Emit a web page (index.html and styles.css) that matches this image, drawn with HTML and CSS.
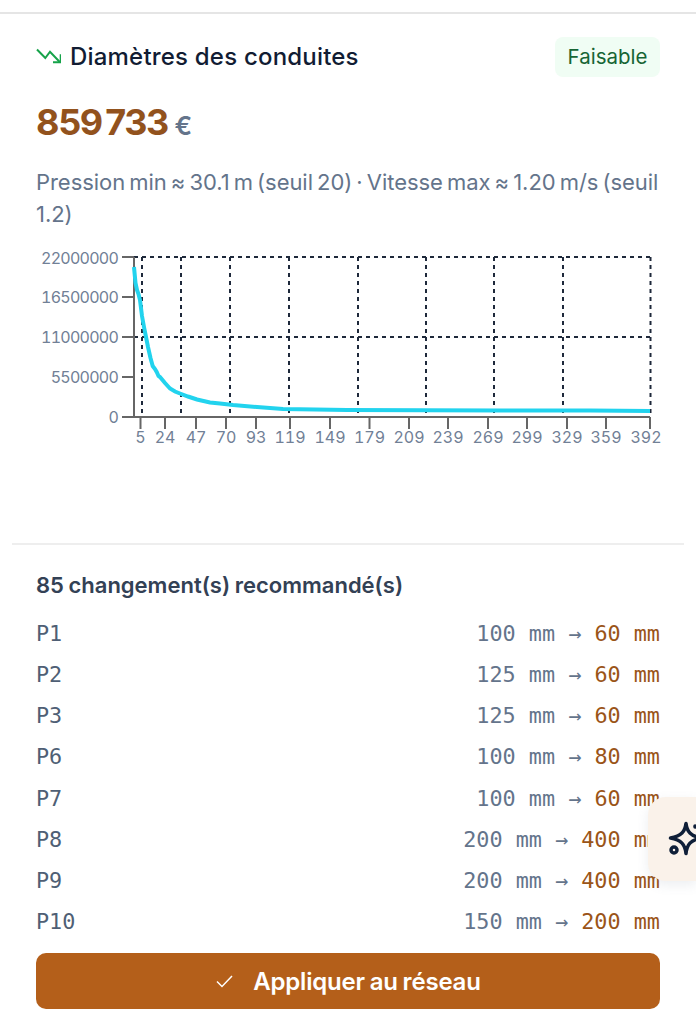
FILE: index.html
```html
<!DOCTYPE html>
<html lang="fr">
<head>
    <meta charset="UTF-8">
    <title>Diamètres des conduites</title>
    <link rel="stylesheet" href="styles.css">
</head>
<body>
<div class="panel">
    <div class="summary">
        <div class="head_row">
            <h2 class="title">
                <svg class="trend_icon" width="25" height="24" viewBox="0 0 25 24" fill="none" stroke="#16a34a" stroke-width="2">
                    <path d="M1 5.500l8.300 8.500 4.700-6.300 10 10.600"/>
                    <path d="M17 18.300h7.700v-8"/>
                </svg>
                Diamètres des conduites
            </h2>
            <span class="badge">Faisable</span>
        </div>
        <div class="price"><span class="price_value">859 733</span> <span class="price_unit">€</span></div>
        <p class="details">Pression min ≈ 30.1 m (seuil 20) · Vitesse max ≈ 1.20 m/s (seuil 1.2)</p>
    </div>

    <svg class="chart" width="696" height="297" viewBox="0 -4 696 297">
        <g class="grid">
            <path d="M134 7H650.500M134 87H650.500"/>
            <path d="M142 7V167M181 7V167M230 7V167M289 7V167M358 7V167M426 7V167M494 7V167M563 7V167M650.500 7V167"/>
        </g>
        <g class="axis">
            <path d="M134 7V167M122 167H650"/>
            <path d="M122 7H134M122 47H134M122 87H134M122 127H134"/>
            <path d="M140.500 167V179M165 167V179M196 167V179M226 167V179M256 167V179M290 167V179M330 167V179M369.500 167V179M409 167V179M448 167V179M488 167V179M527 167V179M567 167V179M606 167V179M650 167V179"/>
        </g>
        <g class="y_labels">
            <text x="118" y="14">22000000</text>
            <text x="118" y="53">16500000</text>
            <text x="118" y="93">11000000</text>
            <text x="118" y="133">5500000</text>
            <text x="118" y="173">0</text>
        </g>
        <g class="x_labels">
            <text x="140.500" y="193">5</text>
            <text x="165" y="193">24</text>
            <text x="196" y="193">47</text>
            <text x="226" y="193">70</text>
            <text x="256" y="193">93</text>
            <text x="290" y="193">119</text>
            <text x="330" y="193">149</text>
            <text x="369.500" y="193">179</text>
            <text x="409" y="193">209</text>
            <text x="448" y="193">239</text>
            <text x="488" y="193">269</text>
            <text x="527" y="193">299</text>
            <text x="567" y="193">329</text>
            <text x="606" y="193">359</text>
            <text x="646" y="193">392</text>
        </g>
        <path class="curve" d="M134 17L135.500 33L137 40L138.500 44L140 50L142 66L144 77L146 87L148 97L150.500 108L152.700 116L155 119L156.700 122L158.500 126L160 127L162.500 130L165 133L170 138.500L175 141.500L180 143.500L188 146.500L197 149.500L210 152.500L220 153.500L233 155L257 157L283 159L347 160L500 160.500L590 160.500L650 161"/>
    </svg>

    <div class="changes">
        <h3 class="changes_title">85 changement(s) recommandé(s)</h3>
        <ul class="change_list">
            <li class="change_row"><span class="pipe">P1</span><span class="sizes">100 mm → <b class="new_size">60 mm</b></span></li>
            <li class="change_row"><span class="pipe">P2</span><span class="sizes">125 mm → <b class="new_size">60 mm</b></span></li>
            <li class="change_row"><span class="pipe">P3</span><span class="sizes">125 mm → <b class="new_size">60 mm</b></span></li>
            <li class="change_row"><span class="pipe">P6</span><span class="sizes">100 mm → <b class="new_size">80 mm</b></span></li>
            <li class="change_row"><span class="pipe">P7</span><span class="sizes">100 mm → <b class="new_size">60 mm</b></span></li>
            <li class="change_row"><span class="pipe">P8</span><span class="sizes">200 mm → <b class="new_size">400 mm</b></span></li>
            <li class="change_row"><span class="pipe">P9</span><span class="sizes">200 mm → <b class="new_size">400 mm</b></span></li>
            <li class="change_row"><span class="pipe">P10</span><span class="sizes">150 mm → <b class="new_size">200 mm</b></span></li>
        </ul>
        <button class="apply_button">
            <svg width="20" height="20" viewBox="0 0 20 20" fill="none" stroke="#fff" stroke-width="1.500">
                <path d="M2 10.500l5 5L17 5"/>
            </svg>
            Appliquer au réseau
        </button>
    </div>
</div>

<div class="assistant_fab">
    <svg class="fab_icon" width="36" height="36" viewBox="0 0 36 36" fill="none" stroke="#0f1f38" stroke-width="3.500" stroke-linejoin="round" stroke-linecap="round">
        <path d="M18 2.500c1 8 4.500 12.500 15 14.500-10.500 2-14 6.500-15 15.500-1-9-4.500-13.500-15.500-15.500C13.500 15 17 10.500 18 2.500z"/>
        <circle cx="6" cy="29" r="3"/>
        <path d="M27 5v1"/>
    </svg>
</div>
</body>
</html>
```

FILE: styles.css
```css
html, body {
    margin: 0;
    background: #fff;
}

body {
    position: relative;
    height: 1032px;
    overflow: hidden;
    font-family: "Inter", "Liberation Sans", sans-serif;
}

.panel {
    margin-top: 12px;
    border-top: 2px solid #e5e5e5;
}

.summary {
    padding: 23px 36px 0;
}

.head_row {
    display: flex;
    justify-content: space-between;
    align-items: flex-start;
}

.title {
    display: flex;
    align-items: center;
    gap: 9px;
    margin: 0;
    height: 38px;
    font-size: 24px;
    font-weight: 500;
    letter-spacing: 0.200px;
    color: #111c33;
}

.trend_icon {
    flex: none;
}

.badge {
    display: block;
    padding: 0 12.500px;
    line-height: 40px;
    font-size: 20.500px;
    color: #166534;
    background: #f0fdf4;
    border-radius: 8px;
}

.price {
    margin-top: 20px;
    line-height: 50px;
}

.price_value {
    font-size: 36px;
    font-weight: 700;
    letter-spacing: -1.300px;
    word-spacing: -4px;
    color: #92521d;
}

.price_unit {
    margin-left: 2px;
    font-size: 26px;
    font-weight: 600;
    color: #64748b;
}

.details {
    margin: 12px 0 0;
    font-size: 22px;
    line-height: 32px;
    letter-spacing: -0.050px;
    word-spacing: -2px;
    color: #64748b;
}

.chart {
    display: block;
    margin-top: 16px;
}

.grid path {
    fill: none;
    stroke: #1e293b;
    stroke-width: 2;
    stroke-dasharray: 4 4;
}

.axis path {
    fill: none;
    stroke: #666;
    stroke-width: 2;
}

.curve {
    fill: none;
    stroke: #22d3ee;
    stroke-width: 4;
}

.y_labels text,
.x_labels text {
    font-size: 16px;
    font-variant-numeric: tabular-nums;
    fill: #718096;
}

.y_labels text {
    text-anchor: end;
    letter-spacing: -0.750px;
}

.x_labels text {
    text-anchor: middle;
}

.changes {
    margin: 0 12px;
    padding: 25px 24px 0;
    border-top: 2px solid #eee;
}

.changes_title {
    margin: 0;
    font-size: 22px;
    font-weight: 600;
    line-height: 30px;
    word-spacing: -1px;
    color: #334155;
}

.change_list {
    margin: 17px 0 0;
    padding: 0;
    list-style: none;
}

.change_row {
    display: flex;
    justify-content: space-between;
    height: 41.140px;
    line-height: 34px;
    font-family: "DejaVu Sans Mono", "Liberation Mono", monospace;
    font-size: 21.800px;
}

.pipe {
    color: #4f5f75;
}

.sizes {
    color: #64748b;
}

.new_size {
    font-weight: 400;
    color: #9a5418;
}

.apply_button {
    display: flex;
    align-items: center;
    justify-content: center;
    gap: 18px;
    width: 100%;
    height: 56px;
    margin-top: 7px;
    border: 0;
    border-radius: 10px;
    background: #b45f1a;
    color: #fff;
    font-family: inherit;
    font-size: 24px;
    font-weight: 600;
    letter-spacing: -0.200px;
    word-spacing: -1px;
}

.assistant_fab {
    position: absolute;
    right: 0;
    top: 797px;
    width: 48px;
    height: 84px;
    overflow: hidden;
    display: flex;
    align-items: center;
    box-sizing: border-box;
    padding-left: 20px;
    border-radius: 18px 0 0 18px;
    background: #faf2ea;
    box-shadow: 0 4px 12px rgba(100, 116, 139, 0.12);
}

.fab_icon {
    flex: none;
}
```
